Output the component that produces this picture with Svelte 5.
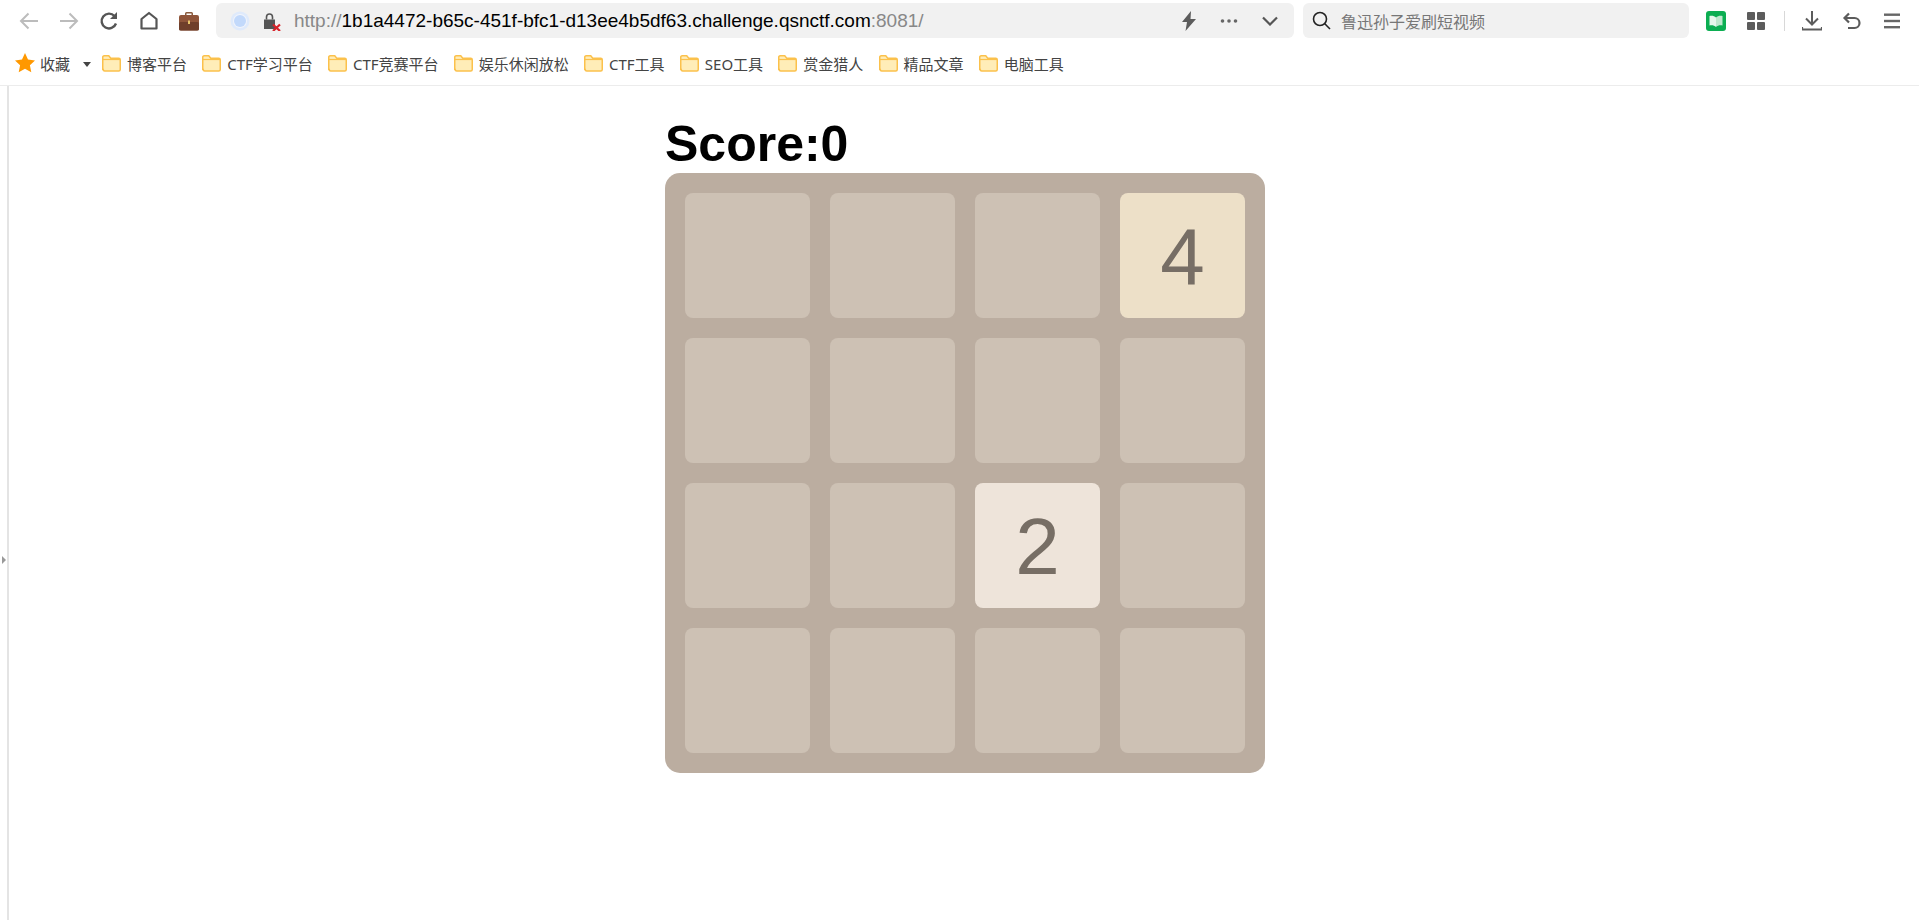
<script>
	let score = 0;

	// rows of the 2048 board, 0 = empty
	const board = [
		[0, 0, 0, 4],
		[0, 0, 0, 0],
		[0, 0, 2, 0],
		[0, 0, 0, 0]
	];

	const bookmarks = [
		"博客平台",
		"CTF学习平台",
		"CTF竞赛平台",
		"娱乐休闲放松",
		"CTF工具",
		"SEO工具",
		"赏金猎人",
		"精品文章",
		"电脑工具"
	];
</script>

<header class="browser">
	<div class="toolbar">
		<nav class="nav-btns">
			<span class="btn">
				<svg width="20" height="20" viewBox="0 0 20 20" fill="none" stroke="#bcbcbc" stroke-width="2"><path d="M19 10H2M9.500 2.500L2 10l7.500 7.500" /></svg>
			</span>
			<span class="btn">
				<svg width="20" height="20" viewBox="0 0 20 20" fill="none" stroke="#bcbcbc" stroke-width="2"><path d="M1 10h17M10.500 2.500L18 10l-7.500 7.500" /></svg>
			</span>
			<span class="btn">
				<svg width="20" height="20" viewBox="0 0 20 20" fill="none" stroke="#555" stroke-width="2.400"><path d="M17 12.500A7.400 7.400 0 1 1 15.500 5" /><path d="M18 1v7h-7" fill="#555" stroke="none" /></svg>
			</span>
			<span class="btn">
				<svg width="20" height="20" viewBox="0 0 20 20" fill="none" stroke="#555" stroke-width="2.200"><path d="M2.500 17.500V8L10 2l7.500 6v9.500z" stroke-linejoin="round" /></svg>
			</span>
			<span class="btn">
				<svg width="22" height="22" viewBox="0 0 22 22"><path d="M7 6V3.500A1.500 1.500 0 0 1 8.500 2h5A1.500 1.500 0 0 1 15 3.500V6h-1.500V3.500h-5V6z" fill="#8a5a3c" /><rect x="1" y="5" width="20" height="15.500" rx="2" fill="#8f553a" /><rect x="1" y="12" width="20" height="8.500" rx="1.500" fill="#6f3f2b" /><rect x="10" y="10.500" width="2" height="3.500" fill="#e8c46a" /></svg>
			</span>
		</nav>

		<div class="address">
			<svg class="globe" width="20" height="20" viewBox="0 0 20 20"><circle cx="10" cy="10" r="9.500" fill="#dfeafb" /><circle cx="10" cy="10" r="7" fill="#f1f4fb" /><circle cx="10" cy="10" r="6" fill="#c2d9fb" /></svg>
			<svg class="lock" width="18" height="20" viewBox="0 0 18 20"><path d="M0 8.500h11v9.500H0z" fill="#555" /><path d="M2.500 8.500V6a3 3 0 0 1 6 0v2.500" fill="none" stroke="#555" stroke-width="1.600" /><path d="M9 13.500l7 6.500m0-6.500l-7 6.500" stroke="#d8232a" stroke-width="2.200" /></svg>
			<span class="url"><span class="dim">http://</span>1b1a4472-b65c-451f-bfc1-d13ee4b5df63.challenge.qsnctf.com<span class="dim">:8081/</span></span>
			<svg class="tool" width="16" height="20" viewBox="0 0 16 20"><path d="M10 0L1 11h5l-1.500 9L15 8H9.500z" fill="#5c5c5c" /></svg>
			<svg class="tool dots" width="18" height="4" viewBox="0 0 18 4" fill="#666"><circle cx="2.500" cy="2" r="1.800" /><circle cx="9" cy="2" r="1.800" /><circle cx="15.500" cy="2" r="1.800" /></svg>
			<svg class="tool chev" width="16" height="10" viewBox="0 0 16 10" fill="none" stroke="#555" stroke-width="2.200"><path d="M1 1.500l7 7 7-7" /></svg>
		</div>

		<div class="search">
			<svg width="19" height="19" viewBox="0 0 19 19" fill="none" stroke="#222" stroke-width="1.600"><circle cx="8" cy="8" r="6.500" /><path d="M12.800 12.800L18 18" /></svg>
			<span>鲁迅孙子爱刷短视频</span>
		</div>

		<div class="actions">
			<span class="btn">
				<svg width="20" height="20" viewBox="0 0 20 20"><rect width="20" height="20" rx="3" fill="#0cae52" /><path d="M3.500 5c2.500-.5 5 0 6.500 1.500V16c-1.500-1.500-4-2-6.500-1.500z" fill="#e6f7ec" /><path d="M16.500 5c-2.500-.5-5 0-6.500 1.500V16c1.500-1.500 4-2 6.500-1.500z" fill="#bfe8ce" /></svg>
			</span>
			<span class="btn">
				<svg width="18" height="18" viewBox="0 0 18 18" fill="#5c5c5c"><rect width="8" height="8" rx="1" /><rect x="10" width="8" height="8" rx="1" /><rect y="10" width="8" height="8" rx="1" /><rect x="10" y="10" width="8" height="8" rx="1" /></svg>
			</span>
			<i class="sep"></i>
			<span class="btn">
				<svg width="20" height="20" viewBox="0 0 20 20" fill="none" stroke="#5c5c5c" stroke-width="2"><path d="M10 0v13M4 7.500l6 6 6-6" /><path d="M0 16v2.500h20V16" stroke-width="2.200" /></svg>
			</span>
			<span class="btn">
				<svg width="20" height="20" viewBox="0 0 20 20" fill="none" stroke="#5c5c5c" stroke-width="2.200"><path d="M3 7h9.500a4.500 4.500 0 0 1 0 10H6" /><path d="M7 2.500L2.500 7 7 11.500" /></svg>
			</span>
			<span class="btn">
				<svg width="16" height="16" viewBox="0 0 16 16" fill="#666"><rect width="16" height="2.400" y="0.500" /><rect width="16" height="2.400" y="6.800" /><rect width="16" height="2.400" y="13" /></svg>
			</span>
		</div>
	</div>

	<div class="bookmarks">
		<svg class="star" width="20" height="20" viewBox="0 0 20 20"><path d="M10 0l3 6.600 7 .8-5.100 4.800 1.400 7L10 15.700l-6.300 3.500 1.400-7L0 7.400l7-.8z" fill="#ff9800" /></svg>
		<span class="fav">收藏</span>
		<i class="caret"></i>
		{#each bookmarks as name}
			<span class="mark">
				<svg width="19" height="17" viewBox="0 0 19 17"><path d="M.750 14.500V2.500A1.500 1.500 0 0 1 2.250.750h4.500l2 2.500h8a1.500 1.500 0 0 1 1.500 1.500v9.750a1.500 1.500 0 0 1-1.500 1.500h-14a1.500 1.500 0 0 1-1.500-1.500z" fill="#ffedb8" stroke="#fbc14c" stroke-width="1.500" /><path d="M1 4.500h17" stroke="#fbc14c" stroke-width="1.200" /></svg>
				{name}
			</span>
		{/each}
	</div>
</header>

<div class="page">
	<div class="rail"><i class="rail-arrow"></i></div>
	<main>
		<h1>Score:{score}</h1>
		<div class="grid">
			{#each board as row}
				{#each row as n}
					<div class="cell" class:t2={n === 2} class:t4={n === 4}>{n || ""}</div>
				{/each}
			{/each}
		</div>
	</main>
</div>

<style>
	:global(body) {
		background: #fff;
		font-family: "Liberation Sans", "Noto Sans CJK SC", sans-serif;
	}

	.browser {
		height: 86px;
		box-sizing: border-box;
		border-bottom: 1px solid #ececec;
	}

	.toolbar {
		display: flex;
		align-items: center;
		height: 41px;
	}

	.nav-btns {
		display: flex;
		margin-left: 9px;
		margin-right: 7px;
	}

	.btn {
		display: flex;
		align-items: center;
		justify-content: center;
		width: 40px;
		height: 36px;
	}

	.address,
	.search {
		display: flex;
		align-items: center;
		height: 35px;
		background: #f1f1f1;
		border-radius: 6px;
	}

	.address {
		width: 1078px;
	}

	.globe {
		margin-left: 14px;
	}

	.lock {
		margin-left: 14px;
	}

	.url {
		flex: 1;
		margin-left: 12px;
		font-size: 19px;
		color: #000;
		white-space: nowrap;
	}

	.dim {
		color: #888;
	}

	.tool {
		flex: none;
	}

	.dots {
		margin-left: 23px;
	}

	.chev {
		margin-left: 24px;
		margin-right: 16px;
	}

	.search {
		width: 386px;
		margin-left: 9px;
		color: #777;
		font-size: 16px;
	}

	.search svg {
		margin-left: 9px;
		margin-right: 10px;
	}

	.actions {
		display: flex;
		align-items: center;
		margin-left: 7px;
	}

	.sep {
		width: 1px;
		height: 20px;
		margin: 0 7px 0 8px;
		background: #d8d8d8;
	}

	.bookmarks {
		display: flex;
		align-items: center;
		height: 44px;
		padding-left: 15px;
		box-sizing: border-box;
		font-family: "Noto Sans", "Noto Sans CJK SC", sans-serif;
		font-size: 15px;
		color: #444;
		white-space: nowrap;
	}

	.fav {
		margin-left: 5px;
	}

	.caret {
		width: 0;
		height: 0;
		margin: 2px 11px 0 13px;
		border-left: 4px solid transparent;
		border-right: 4px solid transparent;
		border-top: 5px solid #444;
	}

	.mark {
		display: flex;
		align-items: center;
		gap: 6px;
		margin-right: 15.200px;
	}

	.page {
		display: flex;
		min-height: 834px;
	}

	.rail {
		position: relative;
		width: 2px;
		margin-left: 7px;
		background: #e4e4e4;
	}

	.rail-arrow {
		position: absolute;
		left: -5px;
		top: 470px;
		width: 0;
		height: 0;
		border-top: 4px solid transparent;
		border-bottom: 4px solid transparent;
		border-left: 4px solid #999;
	}

	main {
		width: 600px;
		margin-left: 656px;
		padding-top: 29px;
	}

	h1 {
		margin: 0;
		font-size: 50px;
		font-weight: bold;
		color: #000;
	}

	.grid {
		display: grid;
		grid-template-columns: repeat(4, 125px);
		grid-auto-rows: 125px;
		gap: 20px;
		padding: 20px;
		background: #bbada0;
		border-radius: 15px;
	}

	.cell {
		display: flex;
		align-items: center;
		justify-content: center;
		padding-top: 3px;
		box-sizing: border-box;
		background: #cdc1b4;
		border-radius: 8px;
		font-size: 80px;
		color: #776e65;
	}

	.t2 {
		background: #eee4da;
	}

	.t4 {
		background: #ede0c8;
	}
</style>
